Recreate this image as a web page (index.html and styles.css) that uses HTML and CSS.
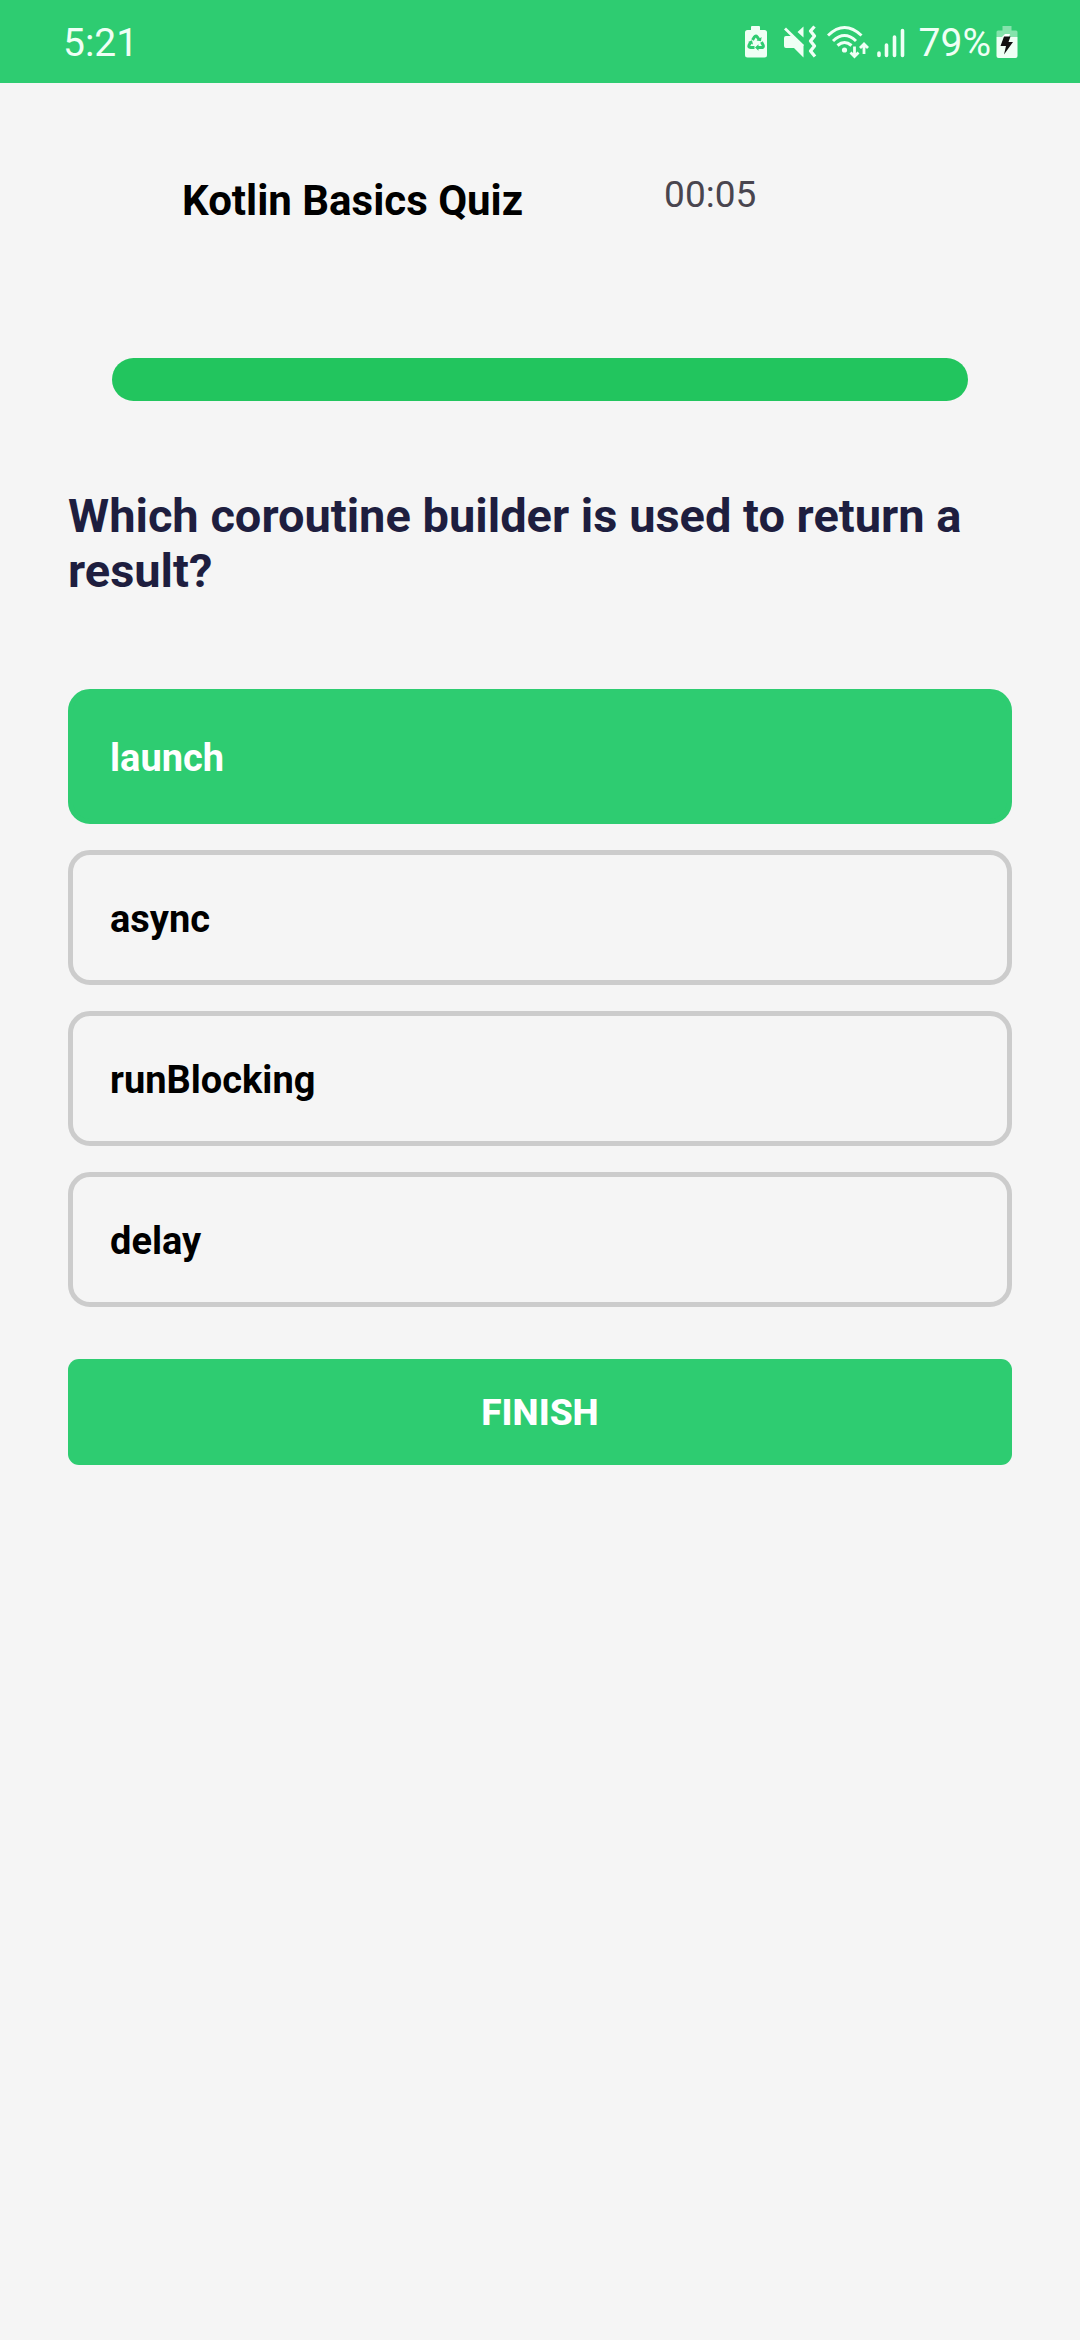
FILE: index.html
```html
<!DOCTYPE html>
<html lang="en">
<head>
<meta charset="utf-8">
<meta name="viewport" content="width=device-width, initial-scale=1">
<title>Kotlin Basics Quiz</title>
<link rel="stylesheet" href="styles.css">
</head>
<body>
<div class="status-bar">
  <time class="status-text">5:21</time>
  <div class="status-icons">
    <svg class="icon icon-saver" width="24" height="36" viewBox="0 0 24 36" aria-hidden="true">
      <path fill="currentColor" d="M8 1h7q1 0 1 1v3h4.500q2.500 0 2.500 2.500v22.500q0 2.500-2.500 2.500H3.500Q1 32.500 1 30V7.500Q1 5 3.500 5H7V2q0-1 1-1z"/>
      <g class="cutout" stroke-width="3" fill="none">
        <path d="M8.500 15l2-3.200q1.300-1.800 2.700 0l1.800 2.700"/>
        <path d="M17.500 17l1.600 3q.9 2.400-1.600 2.600h-3.500"/>
        <path d="M10.500 22.600H6.600q-2.600-.2-1.500-2.600l1.500-2.500"/>
      </g>
      <path class="cutout-fill" d="M12.500 15.500l4.500.8.600-4.300zM14.500 19.200v6.600l-3.500-3.300zM4 17l4-1.700 1 4.200z"/>
    </svg>
    <svg class="icon icon-mute" width="34" height="36" viewBox="0 0 34 36" aria-hidden="true">
      <path fill="currentColor" d="M3 11h5.500L20.500 20v12.500L11 23H3q-2 0-2-2v-8q0-2 2-2zM20.500 1.500v11l-6-5.500z"/>
      <path fill="none" stroke="currentColor" stroke-width="2.800" d="M2 3.500l18 17.500"/>
      <path fill="none" stroke="currentColor" stroke-width="3.300" stroke-linejoin="round" d="M31.500 1.500l-4 4.500 4 5-4 5 4 5-4 5 4.500 5.500"/>
    </svg>
    <svg class="icon icon-wifi" width="42" height="36" viewBox="0 0 42 36" aria-hidden="true">
      <g fill="none" stroke="currentColor" stroke-width="3">
        <path d="M1 10.500q16.500-16 33.500 0M6 16q11.500-11 23 0M10.500 20.500q7-6 14 0"/>
        <path stroke-width="2.800" d="M27.500 21.500v10M23.500 27.500l4 4 4-4M37 29V19M33 23l4-4 4 4"/>
      </g>
      <circle fill="currentColor" cx="17.500" cy="25" r="2.600"/>
    </svg>
    <svg class="icon icon-signal" width="28" height="36" viewBox="0 0 28 36" aria-hidden="true">
      <path fill="none" stroke="currentColor" stroke-width="3.600" stroke-linecap="round" d="M2 28v2.500M9.500 20v10.500M17.500 12v18.500M25.500 5.500v25"/>
    </svg>
    <span class="status-text">79%</span>
    <svg class="icon icon-battery" width="22" height="36" viewBox="0 0 22 36" aria-hidden="true">
      <path fill="currentColor" opacity=".45" d="M6.500 1h9v4.500H20q1.500 0 1.500 1.500V12H.5V7Q.5 5.500 2 5.500h4.500z"/>
      <path fill="currentColor" d="M.5 12h21v19q0 2-2 2h-17q-2 0-2-2z"/>
      <path fill="#fff" d="M7 11l2-2h5l-1 3H6z"/>
      <path class="bolt" d="M8 11.500h6.500L12.500 17H17L8 29.500l2-8.500H4.500z"/>
    </svg>
  </div>
</div>

<main class="quiz">
  <header class="quiz-header">
    <h1 class="quiz-title">Kotlin Basics Quiz</h1>
    <time class="quiz-timer">00:05</time>
  </header>
  <progress class="quiz-progress" value="1" max="1" aria-label="Quiz progress"></progress>
  <h2 class="question">Which coroutine builder is used to return a result?</h2>
  <div class="options">
    <button class="option option-selected" type="button" aria-pressed="true">launch</button>
    <button class="option" type="button" aria-pressed="false">async</button>
    <button class="option" type="button" aria-pressed="false">runBlocking</button>
    <button class="option" type="button" aria-pressed="false">delay</button>
  </div>
  <button class="finish" type="button">FINISH</button>
</main>
</body>
</html>
```
FILE: styles.css
```css
:root {
  --green: #2ecc71;
  --page: #f5f5f5;
  --status: #effff5;
}

* {
  box-sizing: border-box;
}

body {
  margin: 0;
  background: var(--page);
  color: #000;
  font-family: Roboto, "Noto Sans", sans-serif;
}

.status-bar {
  display: flex;
  align-items: center;
  justify-content: space-between;
  height: 83px;
  padding: 2px 62px 0 63px;
  background: var(--green);
  color: var(--status);
}

.status-text {
  font-size: 39px;
  line-height: 48px;
}

.status-icons {
  display: flex;
  align-items: center;
}

.icon {
  display: block;
  flex: none;
}

.icon-mute {
  margin-left: 15px;
}

.icon-wifi {
  margin-left: 10px;
}

.icon-signal {
  margin: 0 14px 0 8px;
}

.icon-battery {
  margin-left: 5px;
}

.cutout {
  stroke: var(--green);
}

.cutout-fill {
  fill: var(--green);
}

.bolt {
  fill: #111;
}

.quiz {
  display: flex;
  flex-direction: column;
  padding: 93px 68px 68px;
}

.quiz-header {
  display: flex;
  align-items: flex-start;
  gap: 141px;
  padding-left: 114px;
}

.quiz-title {
  margin: 0;
  font-size: 42px;
  font-weight: 700;
  line-height: 50px;
}

.quiz-timer {
  color: #49454f;
  font-size: 37px;
  line-height: 38px;
}

.quiz-progress {
  appearance: none;
  display: block;
  width: auto;
  height: 43px;
  margin: 132px 44px 0;
  border: 0;
  border-radius: 22px;
  background: #ddd;
  overflow: hidden;
}

.quiz-progress::-webkit-progress-bar {
  background: #ddd;
}

.quiz-progress::-webkit-progress-value {
  background: #22c55e;
}

.question {
  margin: 87px 0 0;
  color: #1e1e3f;
  font-size: 47px;
  font-weight: 700;
  line-height: 55px;
}

.options {
  display: grid;
  gap: 26px;
  margin-top: 91px;
}

.option {
  min-height: 135px;
  padding: 2px 37px 0;
  border: 5px solid #ccc;
  border-radius: 22px;
  background: transparent;
  color: #000;
  font: 700 38px/44px Roboto, "Noto Sans", sans-serif;
  text-align: left;
}

.option-selected {
  border-color: var(--green);
  background: var(--green);
  color: #fff;
}

.finish {
  min-height: 106px;
  margin-top: 52px;
  padding: 2px 0 0;
  border: 0;
  border-radius: 11px;
  background: var(--green);
  color: #fff;
  font: 800 37px/44px Roboto, "Noto Sans", sans-serif;
}
```
